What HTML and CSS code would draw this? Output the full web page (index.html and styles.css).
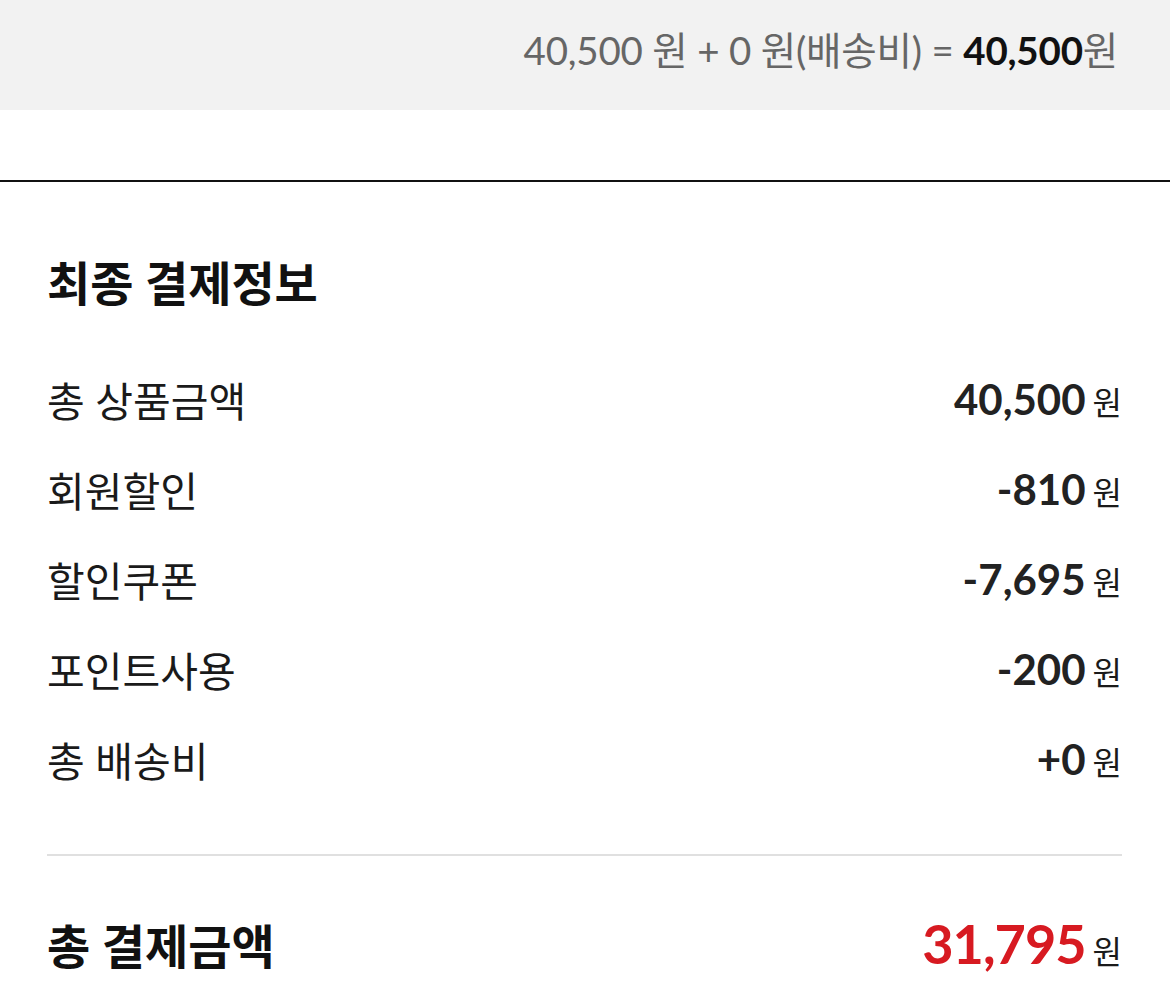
FILE: index.html
```html
<!DOCTYPE html>
<html lang="ko">
<head>
<meta charset="utf-8">
<link rel="stylesheet" href="styles.css">
</head>
<body>
<div class="summary-bar">
  <span class="summary-text">40,500 원 + 0 원(배송비) = <strong class="summary-total">40,500</strong>원</span>
</div>
<div class="spacer"></div>
<section class="payment">
  <h2 class="payment-title">최종 결제정보</h2>
  <ul class="rows">
    <li class="row"><span class="label">총 상품금액</span><span class="value"><b class="num">40,500</b><span class="won">원</span></span></li>
    <li class="row"><span class="label">회원할인</span><span class="value"><b class="num">-810</b><span class="won">원</span></span></li>
    <li class="row"><span class="label">할인쿠폰</span><span class="value"><b class="num">-7,695</b><span class="won">원</span></span></li>
    <li class="row"><span class="label">포인트사용</span><span class="value"><b class="num">-200</b><span class="won">원</span></span></li>
    <li class="row"><span class="label">총 배송비</span><span class="value"><b class="num">+0</b><span class="won">원</span></span></li>
  </ul>
  <div class="total-row">
    <span class="total-label">총 결제금액</span>
    <span class="value"><b class="total-num">31,795</b><span class="won">원</span></span>
  </div>
</section>
</body>
</html>
```

FILE: styles.css
```css
html, body {
  margin: 0;
  padding: 0;
  background: #fff;
  font-family: Lato, "Noto Sans CJK KR", sans-serif;
  color: #1a1a1a;
}

.summary-bar {
  height: 110px;
  background: #f2f2f2;
  display: flex;
  align-items: center;
  justify-content: flex-end;
  padding: 0 52px 14px 0;
  box-sizing: border-box;
}

.summary-text {
  font-size: 38.5px;
  color: #666;
  letter-spacing: -0.2px;
}

.summary-total {
  color: #111;
  font-weight: 700;
}

.spacer {
  height: 70px;
}

.payment {
  border-top: 2px solid #111;
  padding: 0 48px 0 47px;
}

.payment-title {
  margin: 0;
  padding-top: 76px;
  font-size: 47px;
  line-height: 50px;
  font-weight: 700;
  color: #111;
}

.rows {
  list-style: none;
  margin: 46px 0 0;
  padding: 0 0 50px;
  border-bottom: 2px solid #e0e0e0;
}

.row {
  height: 90px;
  display: flex;
  align-items: center;
  justify-content: space-between;
}

.label {
  font-size: 41px;
  color: #1a1a1a;
}

.value {
  display: flex;
  align-items: baseline;
  gap: 7px;
}

.num {
  font-size: 42px;
  font-weight: 700;
  color: #222;
}

.won {
  font-size: 32px;
  color: #1a1a1a;
}

.total-row {
  height: 90px;
  margin-top: 42px;
  display: flex;
  align-items: center;
  justify-content: space-between;
}

.total-label {
  font-size: 47px;
  font-weight: 700;
  color: #111;
}

.total-num {
  font-size: 54px;
  font-weight: 700;
  color: #d71a21;
  letter-spacing: -1px;
}
```
